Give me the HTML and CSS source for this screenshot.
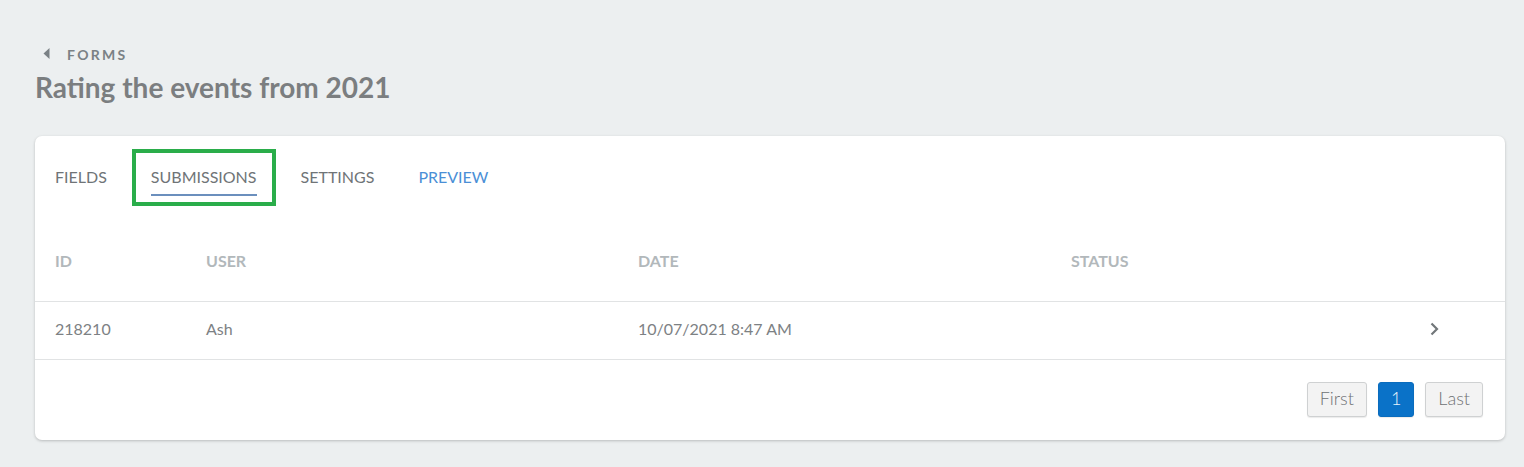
FILE: index.html
```html
<!DOCTYPE html>
<html lang="en">
<head>
<meta charset="utf-8">
<title>Rating the events from 2021</title>
<link rel="stylesheet" href="styles.css">
</head>
<body>
<div class="page">
  <header class="page-head">
    <a class="crumb" href="#">
      <svg class="crumb-caret" width="7" height="11" viewBox="0 0 7 11"><path d="M6.5 0 L0.5 5.5 L6.5 11 Z" fill="#7a8185"/></svg>
      <span>FORMS</span>
    </a>
    <h1 class="title">Rating the events from 2021</h1>
  </header>

  <section class="card">
    <nav class="tabs">
      <a class="tab" href="#">FIELDS</a>
      <a class="tab tab-active tab-marked" href="#">SUBMISSIONS</a>
      <a class="tab" href="#">SETTINGS</a>
      <a class="tab tab-link" href="#">PREVIEW</a>
    </nav>

    <div class="table">
      <div class="row row-head">
        <div class="cell">ID</div>
        <div class="cell">USER</div>
        <div class="cell">DATE</div>
        <div class="cell">STATUS</div>
        <div class="cell"></div>
      </div>
      <div class="row row-body">
        <div class="cell">218210</div>
        <div class="cell">Ash</div>
        <div class="cell">10/07/2021 8:47 AM</div>
        <div class="cell"></div>
        <div class="cell cell-go">
          <svg width="9" height="14" viewBox="0 0 9 14"><path d="M1.5 1.5 L7 7 L1.5 12.5" fill="none" stroke="#72777a" stroke-width="2.2"/></svg>
        </div>
      </div>
    </div>

    <div class="pager">
      <button class="pg-btn">First</button>
      <button class="pg-btn pg-current">1</button>
      <button class="pg-btn">Last</button>
    </div>
  </section>
</div>
</body>
</html>
```

FILE: styles.css
```css
* { box-sizing: border-box; }
html, body { margin: 0; padding: 0; }
body {
  background: #eceff0;
  font-family: Lato, "Open Sans", Arial, sans-serif;
  color: #7b7f82;
}
.page {
  padding: 46px 19px 26px 35px;
}
.page-head {
  display: flex;
  flex-direction: column;
}
.crumb {
  display: flex;
  align-items: center;
  gap: 17px;
  padding-left: 8px;
  text-decoration: none;
  color: #7a8185;
  font-weight: 700;
  font-size: 14px;
  letter-spacing: 2.3px;
  line-height: 18px;
}
.crumb-caret { margin-top: -3px; }
.title {
  margin: 6px 0 0 0;
  font-size: 28px;
  line-height: 34px;
  font-weight: 700;
  color: #7b7e80;
}
.card {
  margin-top: 32px;
  background: #fff;
  border-radius: 7px;
  box-shadow: 0 1px 3px rgba(0,0,0,0.22);
}
.tabs {
  display: flex;
  gap: 44px;
  padding: 31px 20px 0 20px;
}
.tab {
  position: relative;
  font-size: 16px;
  line-height: 20px;
  padding-bottom: 7px;
  border-bottom: 2px solid transparent;
  color: #6f7477;
  text-decoration: none;
}
.tab-active { border-bottom-color: #6b8fbd; }
.tab-link { color: #4a8fd6; }
.tab-marked::after {
  content: "";
  position: absolute;
  left: -19px;
  right: -19px;
  top: -18px;
  bottom: -12px;
  border: 4px solid #2aad4a;
}
.table { display: flex; flex-direction: column; }
.row {
  display: grid;
  grid-template-columns: 151px 432px 433px 1fr 90px;
  border-bottom: 1px solid #e1e3e4;
  font-size: 16px;
  line-height: 20px;
}
.cell { padding-left: 20px; }
.row-head {
  padding: 55px 0 30px 0;
  font-weight: 700;
  color: #b2b8bb;
}
.row-body {
  padding: 17px 0 20px 0;
  color: #7d8184;
}
.cell-go {
  display: flex;
  align-items: center;
  padding-left: 15px;
}
.pager {
  display: flex;
  justify-content: flex-end;
  align-items: center;
  gap: 11px;
  padding: 22px 22px 23px 0;
}
.pg-btn {
  height: 35px;
  min-width: 35px;
  padding: 0 12px 3px 12px;
  border: 1px solid #cfd1d2;
  border-radius: 3px;
  background: #f3f3f3;
  color: #6e7173;
  font-family: Lato, "Open Sans", Arial, sans-serif;
  font-size: 18px;
  font-weight: 300;
  box-shadow: 0 1px 1px rgba(0,0,0,0.08);
}
.pg-current {
  background: #0a72c8;
  border-color: #0a6cbd;
  color: #e8f2fb;
}
```
